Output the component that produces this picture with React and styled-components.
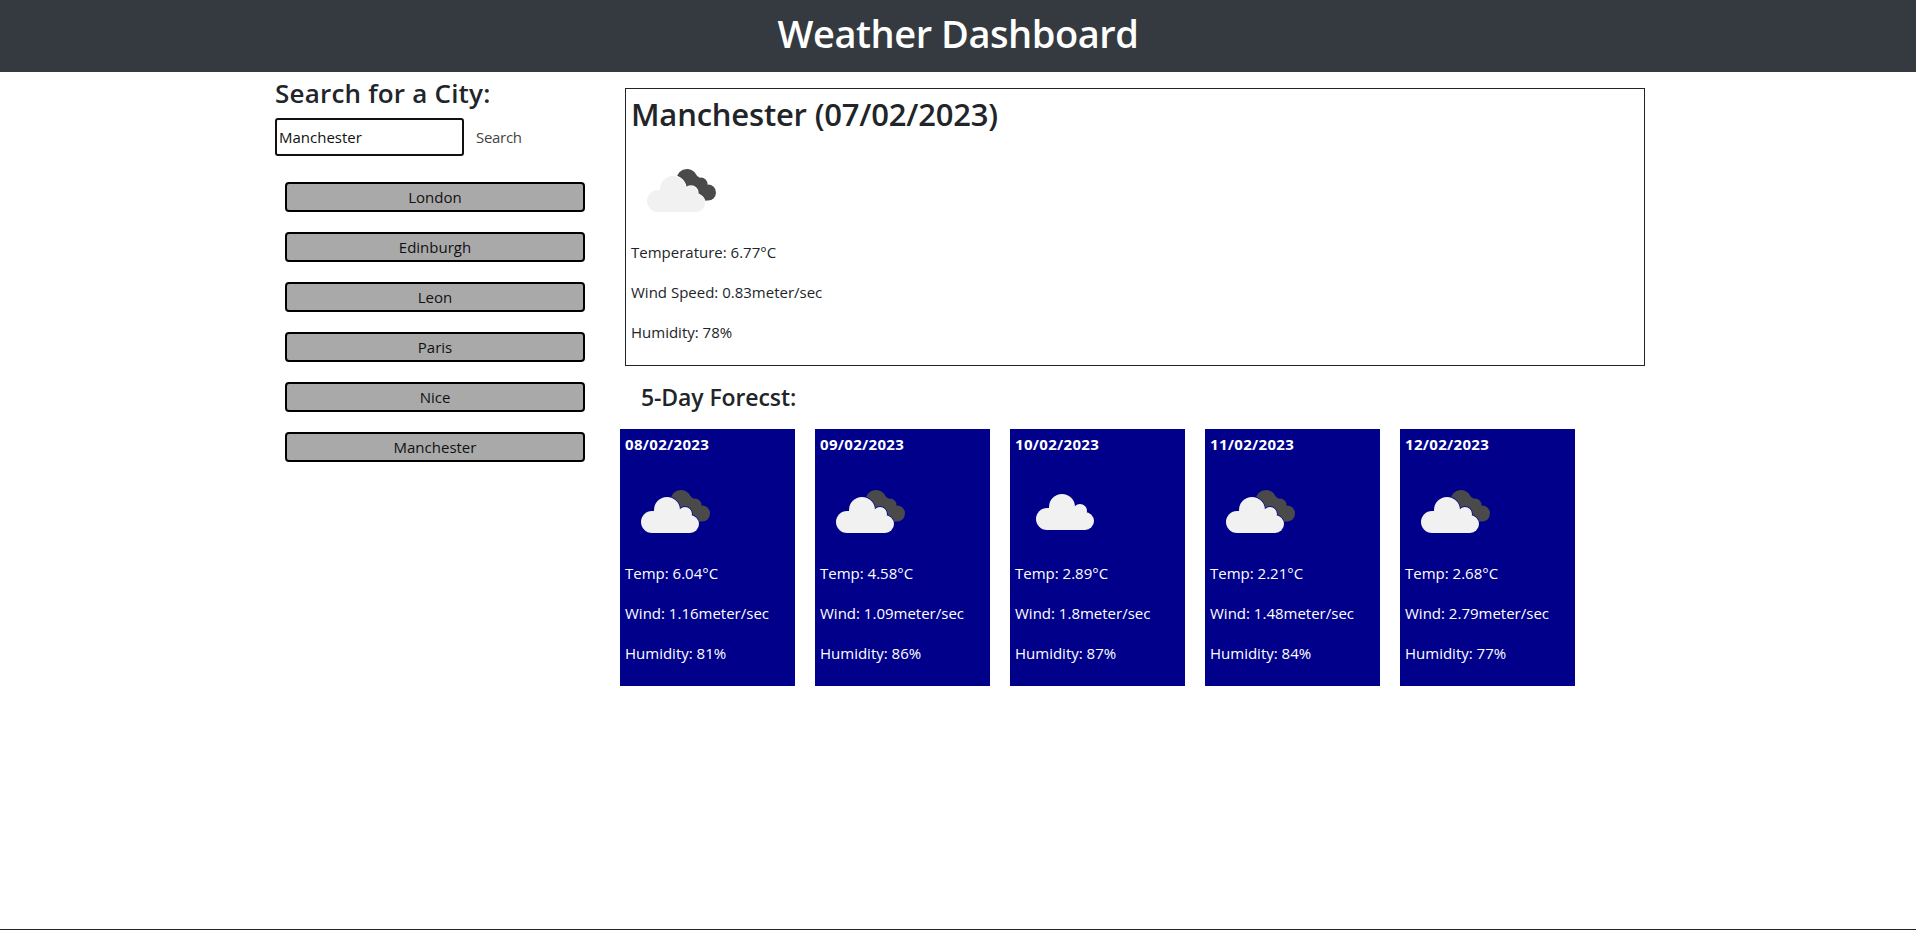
import React from "react";
import styled, { createGlobalStyle } from "styled-components";

const Global = createGlobalStyle`
  html, body { margin: 0; padding: 0; background: #fff; }
  body { font-family: "Open Sans", "Noto Sans", sans-serif; font-size: 15px; color: #212529; }
  * { box-sizing: border-box; }
`;
const Page = styled.div`
  min-height: 930px; display: flex; flex-direction: column;
`;
const Header = styled.header`
  height: 72px; background: #343a40; color: #fff; display: flex; align-items: center; justify-content: center; padding-bottom: 4px;
`;
const Title = styled.h1`
  margin: 0; font-size: 38px; font-weight: 600; letter-spacing: -0.45px; line-height: 1.2;
`;
const Content = styled.main`
  flex: 1; display: flex; padding-left: 275px;
`;
const Sidebar = styled.aside`
  width: 345px; flex: none; padding-top: 5px;
`;
const SearchTitle = styled.h2`
  margin: 0 0 8px; font-size: 26px; font-weight: 600; letter-spacing: 0.2px; line-height: 33px;
`;
const SearchRow = styled.form`
  display: flex; align-items: center;
`;
const Input = styled.input`
  width: 189px; height: 38px; border: 2px solid #111; border-radius: 3px; padding: 0 2px;
  font: 15px "Open Sans", sans-serif; color: #111;
`;
const SearchButton = styled.button`
  margin-left: 12px; border: 0; background: none; padding: 0; color: #444;
  font: 15px "Open Sans", sans-serif; letter-spacing: -0.3px;
`;
const CityList = styled.div`
  display: flex; flex-direction: column; gap: 20px; margin: 26px 0 0 10px;
`;
const CityButton = styled.button`
  width: 300px; height: 30px; border: 2px solid #000; border-radius: 4px; background: #a9a9a9;
  color: #111; padding: 0; font: 15px "Open Sans", sans-serif;
`;
const Results = styled.section`
  flex: 1; padding-top: 16px;
`;
const Current = styled.div`
  width: 1020px; height: 278px; margin-left: 5px; border: 1px solid #212529; padding: 5px;
`;
const CityTitle = styled.h2`
  margin: 0; font-size: 31px; font-weight: 600; letter-spacing: -0.2px; line-height: 40px;
`;
const IconSlot = styled.div`
  height: 101px; margin: 7px 0 0;
`;
const Stat = styled.p`
  margin: 0 0 20px; font-size: 15px; line-height: 20px;
`;
const ForecastTitle = styled.h3`
  margin: 17px 0 0 21px; font-size: 23px; font-weight: 600; letter-spacing: -0.1px; line-height: 28px;
`;
const Cards = styled.div`
  display: flex; gap: 20px; margin-top: 18px;
`;
const Card = styled.article`
  width: 175px; height: 257px; background: #00008b; color: #fff; padding: 5px 5px 0;
`;
const CardDate = styled.h5`
  margin: 0; font-size: 15px; font-weight: 700; line-height: 20px; letter-spacing: 0.3px;
`;
const CardIcon = styled.div`
  height: 101px; margin: 8px 0 0;
`;
const Footer = styled.footer`
  height: 1px; background: #212529;
`;

const FrontShape = (props) => (
  <g {...props}>
    <circle cx="27" cy="60" r="11" />
    <circle cx="42" cy="48" r="13" />
    <circle cx="60" cy="52" r="7" />
    <circle cx="65" cy="62" r="9" />
    <path d="M27 49h33v13h5v9H27z" />
  </g>
);

const Icon = ({ id, few }) => (
  <svg width="100" height="100" viewBox="0 0 100 100" aria-hidden="true">
    {few ? (
      <FrontShape fill="#f1f1f1" transform="translate(5 -3)" />
    ) : (
      <>
        <mask id={id} maskUnits="userSpaceOnUse" x="0" y="0" width="100" height="100">
          <rect width="100" height="100" fill="#fff" />
          <FrontShape fill="#000" stroke="#000" strokeWidth="1.4" />
        </mask>
        <g fill="#4a4a4a" mask={`url(#${id})`}>
          <circle cx="56" cy="38.5" r="10.5" />
          <circle cx="70" cy="43" r="6.5" />
          <circle cx="77" cy="51.5" r="8" />
          <path d="M47 34l10-6 16 12 8 18-8 2-16-10z" />
        </g>
        <FrontShape fill="#f1f1f1" />
      </>
    )}
  </svg>
);

const cities = ["London", "Edinburgh", "Leon", "Paris", "Nice", "Manchester"];
const days = [
  { d: "08/02/2023", t: "6.04", w: "1.16", h: 81 },
  { d: "09/02/2023", t: "4.58", w: "1.09", h: 86 },
  { d: "10/02/2023", t: "2.89", w: "1.8", h: 87, few: true },
  { d: "11/02/2023", t: "2.21", w: "1.48", h: 84 },
  { d: "12/02/2023", t: "2.68", w: "2.79", h: 77 },
];

export default function App() {
  return (
    <Page>
      <Global />
      <Header><Title>Weather Dashboard</Title></Header>
      <Content>
        <Sidebar>
          <SearchTitle>Search for a City:</SearchTitle>
          <SearchRow onSubmit={(e) => e.preventDefault()}>
            <Input defaultValue="Manchester" />
            <SearchButton>Search</SearchButton>
          </SearchRow>
          <CityList>
            {cities.map((c) => <CityButton key={c}>{c}</CityButton>)}
          </CityList>
        </Sidebar>
        <Results>
          <Current>
            <CityTitle>Manchester (07/02/2023)</CityTitle>
            <IconSlot><Icon id="cur" /></IconSlot>
            <Stat>Temperature: 6.77°C</Stat>
            <Stat>Wind Speed: 0.83meter/sec</Stat>
            <Stat>Humidity: 78%</Stat>
          </Current>
          <ForecastTitle>5-Day Forecst:</ForecastTitle>
          <Cards>
            {days.map((x, i) => (
              <Card key={x.d}>
                <CardDate>{x.d}</CardDate>
                <CardIcon><Icon id={`day${i}`} few={x.few} /></CardIcon>
                <Stat>Temp: {x.t}°C</Stat>
                <Stat>Wind: {x.w}meter/sec</Stat>
                <Stat>Humidity: {x.h}%</Stat>
              </Card>
            ))}
          </Cards>
        </Results>
      </Content>
      <Footer />
    </Page>
  );
}
